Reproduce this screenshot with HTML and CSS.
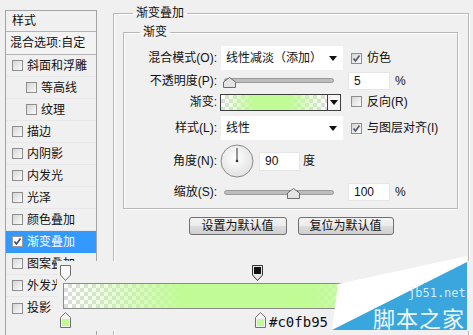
FILE: index.html
```html
<!DOCTYPE html>
<html lang="zh-CN">
<head>
<meta charset="utf-8">
<title>图层样式</title>
<link rel="stylesheet" href="styles.css">
</head>
<body>
<div class="dialog">
  <div class="list">
    <div class="row head">样式</div>
    <div class="row blend">混合选项:自定</div>
    <div class="row"><span class="cb"></span>斜面和浮雕</div>
    <div class="row sub"><span class="cb"></span>等高线</div>
    <div class="row sub"><span class="cb"></span>纹理</div>
    <div class="row"><span class="cb"></span>描边</div>
    <div class="row"><span class="cb"></span>内阴影</div>
    <div class="row"><span class="cb"></span>内发光</div>
    <div class="row"><span class="cb"></span>光泽</div>
    <div class="row"><span class="cb"></span>颜色叠加</div>
    <div class="row sel"><span class="cb on"><svg width="9" height="9" viewBox="0 0 9 9"><path d="M1.5 4.5 L3.5 7 L7.5 1.5" fill="none" stroke="#3c4a6e" stroke-width="1.6"/></svg></span>渐变叠加</div>
    <div class="row"><span class="cb"></span>图案叠加</div>
    <div class="row"><span class="cb"></span>外发光</div>
    <div class="row last"><span class="cb"></span>投影</div>
  </div>

  <fieldset class="outer">
    <legend>渐变叠加</legend>
    <fieldset class="inner">
      <legend>渐变</legend>
      <div class="grid">
        <div class="c lab">混合模式(O):</div>
        <div class="c"><div class="select"><span>线性减淡（添加）</span><span class="arrow"></span></div></div>
        <div class="c extra"><span class="cb chk"><svg width="9" height="9" viewBox="0 0 9 9"><path d="M1.5 4.5 L3.5 7 L7.5 1.5" fill="none" stroke="#4b556c" stroke-width="1.6"/></svg></span>仿色</div>

        <div class="c lab">不透明度(P):</div>
        <div class="c"><div class="slider"><div class="track"></div><svg class="thumb t-op" width="13" height="11" viewBox="0 0 13 11"><path d="M6.5 0.5 L12.5 5 V10.5 H0.5 V5 Z" fill="#e4e4e4" stroke="#6d6d6d"/></svg></div></div>
        <div class="c extra"><span class="num">5</span><span class="pct">%</span></div>

        <div class="c lab">渐变:</div>
        <div class="c"><div class="swatchbox"><div class="swatch"></div><div class="swbtn"><span class="arrow"></span></div></div></div>
        <div class="c extra"><span class="cb chk"></span>反向(R)</div>

        <div class="c lab r4">样式(L):</div>
        <div class="c r4"><div class="select"><span>线性</span><span class="arrow"></span></div></div>
        <div class="c extra r4"><span class="cb chk"><svg width="9" height="9" viewBox="0 0 9 9"><path d="M1.5 4.5 L3.5 7 L7.5 1.5" fill="none" stroke="#4b556c" stroke-width="1.6"/></svg></span>与图层对齐(I)</div>

        <div class="c lab">角度(N):</div>
        <div class="c"><svg class="dial" width="34" height="34" viewBox="0 0 34 34"><defs><radialGradient id="dg" cx="0.45" cy="0.4" r="0.6"><stop offset="0" stop-color="#ffffff"/><stop offset="1" stop-color="#e2e2e2"/></radialGradient></defs><circle cx="17" cy="17" r="16" fill="url(#dg)" stroke="#8a8a8a"/><line x1="17" y1="4" x2="17" y2="17" stroke="#333" stroke-width="1"/><circle cx="17" cy="17" r="1.3" fill="#333"/></svg><span class="num angle">90</span><span class="deg">度</span></div>
        <div class="c"></div>

        <div class="c lab">缩放(S):</div>
        <div class="c"><div class="slider"><div class="track"></div><svg class="thumb t-sc" width="13" height="11" viewBox="0 0 13 11"><path d="M6.5 0.5 L12.5 5 V10.5 H0.5 V5 Z" fill="#e4e4e4" stroke="#6d6d6d"/></svg></div></div>
        <div class="c extra"><span class="num">100</span><span class="pct">%</span></div>
      </div>
    </fieldset>
    <div class="buttons">
      <button class="btn b1">设置为默认值</button>
      <button class="btn b2">复位为默认值</button>
    </div>
  </fieldset>

  <div class="editor">
    <div class="bar"></div>
    <svg class="stop s-top1" width="11" height="16" viewBox="0 0 11 16"><path d="M0.5 0.5 H10.5 V10 L5.5 15.5 L0.5 10 Z" fill="#fafafa" stroke="#6f6f6f"/></svg>
    <svg class="stop s-top2" width="11" height="16" viewBox="0 0 11 16"><path d="M0.5 0.5 H10.5 V10 L5.5 15.5 L0.5 10 Z" fill="#e8e8e8" stroke="#333"/><rect x="2" y="2" width="7" height="7" fill="#111"/></svg>
    <svg class="stop s-bot1" width="11" height="16" viewBox="0 0 11 16"><path d="M5.5 0.5 L10.5 5.5 V15.5 H0.5 V5.5 Z" fill="#f4f4f4" stroke="#707070"/><rect x="2" y="7" width="7" height="7" fill="#c0fb95"/></svg>
    <svg class="stop s-bot2" width="11" height="16" viewBox="0 0 11 16"><path d="M5.5 0.5 L10.5 5.5 V15.5 H0.5 V5.5 Z" fill="#f4f4f4" stroke="#707070"/><rect x="2" y="7" width="7" height="7" fill="#c0fb95"/></svg>
    <span class="hex">#c0fb95</span>
  </div>

  <div class="wm">
    <svg width="473" height="335" viewBox="0 0 473 335"><polygon points="338,284 467,256 467,262 332,330" fill="#ffffff"/><polygon points="467,262 467,330 332,330" fill="#3aa6de"/></svg>
    <span class="wm-en">jb51.net</span>
    <span class="wm-cn">脚本之家</span>
  </div>
</div>
</body>
</html>
```
FILE: styles.css
```css
* { box-sizing: border-box; }
html, body { margin: 0; padding: 0; }
body {
  width: 473px; height: 335px; overflow: hidden;
  background: #f0f0f0;
  font-family: "Liberation Sans", "Noto Sans CJK SC", sans-serif;
  font-size: 12px; color: #111;
}
.dialog { position: relative; display: flex; align-items: flex-start; width: 473px; height: 335px; overflow: hidden; }

/* left list */
.list { flex: none; margin: 10px 0 0 5px; width: 92px; height: 340px; border: 1px solid #a3a3a3; border-bottom: none; background: #f0f0f0; }
.row { display: flex; align-items: center; height: 22px; padding-left: 6px; border-bottom: 1px solid #e7e7e7; white-space: nowrap; overflow: hidden; line-height: 14px; }
.row.last { border-bottom: none; }
.row.head { height: 21px; border-bottom-color: #b4b4b4; }
.row.blend { height: 23px; padding-left: 4px; border-bottom-color: #b4b4b4; background: #f3f3f3; }
.row.sub { padding-left: 20px; }
.row.sel { background: #3399ff; color: #fff; border-bottom-color: #3399ff; }
.cb { flex: none; display: flex; align-items: center; justify-content: center; width: 11px; height: 11px; margin-right: 4px; border: 1px solid #8e8e8e; background: linear-gradient(135deg, #d6d6d6, #fbfbfb); }
.cb.on { background: #fff; border-color: #9a9a9a; }
.cb.chk { margin-right: 5px; }

/* group boxes */
fieldset { margin: 0; min-width: 0; border: 1px solid #b7b7b7; box-shadow: 1px 1px 0 #fff, inset 1px 1px 0 #fff; }
legend { padding: 0 3px; line-height: 14px; font-size: 12px; }
.outer { flex: none; margin: 6px 0 0 16px; padding: 5px 0 0 0; width: 356px; height: 420px; }
.outer > legend { margin-left: 19px; }
.inner { margin: 0 0 0 9px; padding: 7px 0 6px 0; width: 335px; }
.inner > legend { margin-left: 16px; }

.grid { display: grid; grid-template-columns: 93px 122px auto; grid-template-rows: 24px 21px 21px 28px 42px 20px; column-gap: 4px; }
.c { display: flex; align-items: center; height: 100%; white-space: nowrap; line-height: 14px; }
.c.r4 { padding-top: 4px; }
.lab { justify-content: flex-end; }
.extra { margin-left: 4px; }

.select { display: flex; align-items: center; justify-content: space-between; width: 122px; height: 24px; padding: 0 6px 0 5px; background: #fff; }
.arrow { width: 0; height: 0; border-left: 4px solid transparent; border-right: 4px solid transparent; border-top: 5px solid #111; }

.slider { position: relative; width: 122px; height: 12px; padding-left: 3px; display: flex; align-items: center; }
.track { width: 110px; height: 5px; border: 1px solid #9a9a9a; border-radius: 3px; background: #bdbdbd; }
.thumb { position: absolute; top: 2px; }
.t-op { left: 2px; }
.t-sc { left: 66px; }

.num { display: flex; align-items: center; width: 42px; height: 18px; margin-left: -3px; padding-left: 5px; background: #fff; border: 1px solid #e6e6e6; }
.pct { margin-left: 5px; }
.angle { width: 41px; margin-left: 5px; height: 19px; }
.deg { margin-left: 3px; }
.dial { margin-left: -1px; }

.swatchbox { display: flex; width: 121px; height: 17px; margin-left: -1px; margin-top: 2px; border: 1px solid #3e3e3e; }
.swatch, .bar {
  background:
    linear-gradient(to right, rgba(192,251,149,0) 0%, #c0fb95 31%, #c0fb95 64%, rgba(192,251,149,0) 100%),
    repeating-conic-gradient(#dcdcdc 0% 25%, #ffffff 0% 50%) 0 0 / 8px 8px;
}
.swatch { flex: 1; }
.swbtn { flex: none; display: flex; align-items: center; justify-content: center; width: 13px; border-left: 1px solid #3e3e3e; background: #f5f5f5; }

.buttons { display: flex; justify-content: center; gap: 11px; margin-top: 8px; }
.btn { height: 18px; padding: 0; border: 1px solid #707070; border-radius: 3px; font: 12px/14px "Liberation Sans", "Noto Sans CJK SC", sans-serif; color: #111; background: linear-gradient(#f3f3f3, #ebebeb 50%, #dcdcdc 50%, #d0d0d0); }
.b1 { width: 98px; }
.b2 { width: 96px; }

/* gradient editor strip */
.editor { position: absolute; left: 57px; top: 261px; width: 416px; height: 70px; padding: 22px 0 0 6px; background: #f0f0f0; }
.bar { width: 388px; height: 26px; border: 1px solid #8c8c8c; }
.stop { position: absolute; }
.s-top1 { left: 3px; top: 4px; }
.s-top2 { left: 195px; top: 4px; }
.s-bot1 { left: 3px; top: 51px; }
.s-bot2 { left: 198px; top: 51px; }
.hex { position: absolute; left: 212px; top: 53px; font: 14px/16px "DejaVu Sans Mono", monospace; color: #111; }

/* watermark */
.wm { position: absolute; left: 0; top: 0; width: 473px; height: 335px; pointer-events: none; }
.wm svg { display: block; }
.wm-en { position: absolute; left: 408px; top: 287px; font: 12px/12px "DejaVu Sans Mono", monospace; color: #d4ebf8; }
.wm-cn { position: absolute; left: 373px; top: 306px; font: 22px/22px "Noto Sans CJK SC", sans-serif; letter-spacing: 1px; color: #eef7fc; }
```
